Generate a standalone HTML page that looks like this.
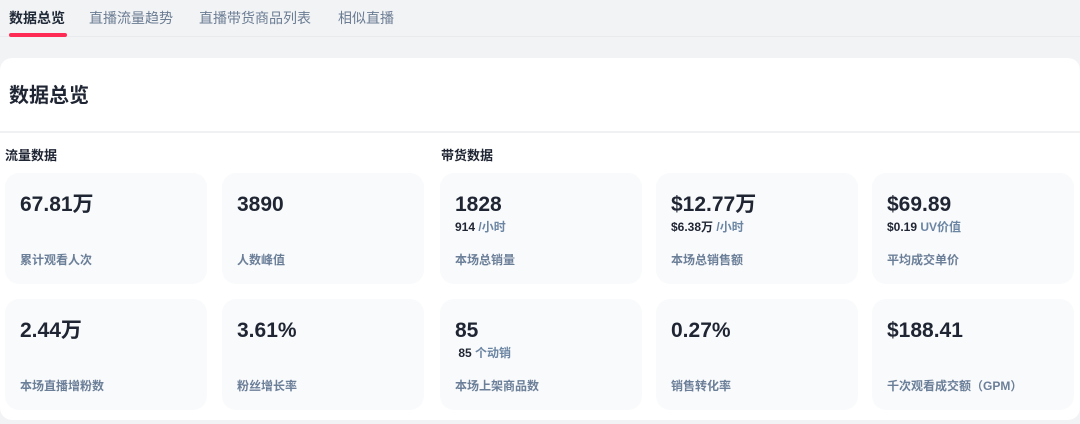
<!DOCTYPE html>
<html><head><meta charset="utf-8"><style>
*{margin:0;padding:0;box-sizing:border-box}
body{width:1080px;height:424px;background:#f2f3f5;font-family:"Liberation Sans","Noto Sans CJK SC",sans-serif;position:relative;overflow:hidden;color:#1f2937}
.tab{position:absolute;top:8px;font-size:14px;color:#6b7c93;line-height:20px}
.tab.a{color:#1f2937;font-weight:bold}
.ul{position:absolute;left:9px;top:33px;width:58px;height:4px;border-radius:2px;background:#fe2c55}
.tl{position:absolute;left:0;top:36px;width:1080px;height:1px;background:#e8eaed}
.main{position:absolute;left:0;top:58px;width:1080px;height:362px;background:#fff;border-radius:12px}
.title{position:absolute;left:9px;top:84px;font-size:20px;font-weight:bold;line-height:24px;color:#1f2533}
.div{position:absolute;left:0;top:131px;width:1080px;height:2px;background:#f0f1f3}
.sec{position:absolute;top:147px;font-size:13px;font-weight:bold;color:#1f2533;line-height:18px}
.c{position:absolute;width:202px;height:111px;background:#f9fafb;border-radius:14px}
.v{position:absolute;left:15px;top:19px;font-size:21px;font-weight:bold;color:#1f2533;line-height:26px}
.s{position:absolute;left:15px;top:46px;font-size:12px;font-weight:bold;color:#1f2533;line-height:16px}
.s span{color:#6b85a3;font-weight:bold}
.l{position:absolute;left:15px;top:79px;font-size:12px;color:#6b7f99;font-weight:bold;line-height:16px}
</style></head><body>
<div class="tab a" style="left:9px">数据总览</div>
<div class="tab" style="left:89px">直播流量趋势</div>
<div class="tab" style="left:199px">直播带货商品列表</div>
<div class="tab" style="left:338px">相似直播</div>
<div class="tl"></div>
<div class="ul"></div>
<div class="main"></div>
<div class="title">数据总览</div>
<div class="div"></div>
<div class="sec" style="left:5px">流量数据</div>
<div class="sec" style="left:441px">带货数据</div>

<div class="c" style="left:5px;top:173px"><div class="v">67.81万</div><div class="l">累计观看人次</div></div>
<div class="c" style="left:222px;top:173px"><div class="v">3890</div><div class="l">人数峰值</div></div>
<div class="c" style="left:440px;top:173px"><div class="v">1828</div><div class="s">914 <span>/小时</span></div><div class="l">本场总销量</div></div>
<div class="c" style="left:656px;top:173px"><div class="v">$12.77万</div><div class="s">$6.38万 <span>/小时</span></div><div class="l">本场总销售额</div></div>
<div class="c" style="left:872px;top:173px"><div class="v">$69.89</div><div class="s">$0.19 <span>UV价值</span></div><div class="l">平均成交单价</div></div>

<div class="c" style="left:5px;top:299px"><div class="v">2.44万</div><div class="l">本场直播增粉数</div></div>
<div class="c" style="left:222px;top:299px"><div class="v">3.61%</div><div class="l">粉丝增长率</div></div>
<div class="c" style="left:440px;top:299px"><div class="v">85</div><div class="s">&nbsp;85 <span>个动销</span></div><div class="l">本场上架商品数</div></div>
<div class="c" style="left:656px;top:299px"><div class="v">0.27%</div><div class="l">销售转化率</div></div>
<div class="c" style="left:872px;top:299px"><div class="v">$188.41</div><div class="l">千次观看成交额（GPM）</div></div>
</body></html>
